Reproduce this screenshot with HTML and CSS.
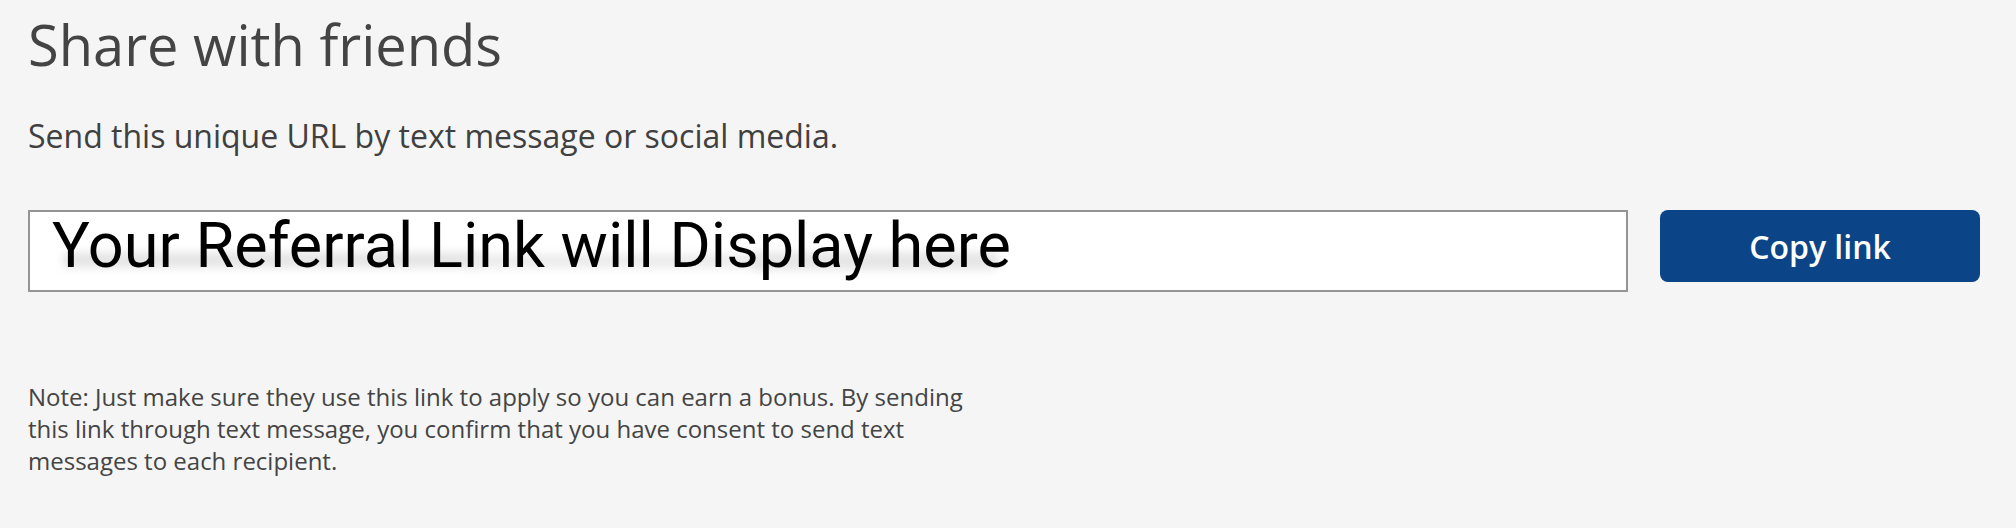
FILE: index.html
```html
<!DOCTYPE html>
<html lang="en">
  <head>
    <meta charset="UTF-8" />
    <meta name="viewport" content="width=device-width, initial-scale=1.0" />
    <title>Share with friends</title>
    <link rel="stylesheet" href="styles.css">
  </head>
  <body>
    <div class="share">
      <h2>Share with friends</h2>
      <p class="intro">Send this unique URL by text message or social media.</p>

      <div class="link-row">
        <div class="link-box">
          <span class="smudge smudge-a"></span>
          <span class="smudge smudge-b"></span>
          <span class="smudge smudge-c"></span>
          <span class="link-text">Your Referral Link will Display here</span>
        </div>
        <button type="button" class="copy-btn">Copy link</button>
      </div>

      <p class="note">
        Note: Just make sure they use this link to apply so you can earn a bonus. By sending
        this link through text message, you confirm that you have consent to send text
        messages to each recipient.
      </p>
    </div>
  </body>
</html>
```

FILE: styles.css
```css
body {
  margin: 0;
  background: #f5f5f5;
  font-family: "Open Sans", Arial, sans-serif;
  color: #404040;
}
.share {
  padding: 10px 36px 0 28px;
}
h2 {
  margin: 0;
  font-size: 56px;
  font-weight: 400;
  line-height: 68px;
  color: #444;
}
.intro {
  margin: 36px 0 0;
  font-size: 32px;
  line-height: 44px;
}
.link-row {
  display: flex;
  align-items: flex-start;
  gap: 32px;
  margin-top: 52px;
}
.link-box {
  position: relative;
  flex: 1;
  height: 78px;
  border: 2px solid #949494;
  background: #fff;
}
.link-text {
  position: relative;
  display: block;
  padding: 2px 0 0 22px;
  font-family: Roboto, "Open Sans", sans-serif;
  font-size: 63px;
  line-height: 64px;
  color: #000;
  white-space: nowrap;
}
.smudge {
  position: absolute;
  background: #e6e6e6;
  border-radius: 10px;
  filter: blur(4px);
}
.smudge-a {
  left: 32px;
  top: 40px;
  width: 420px;
  height: 16px;
}
.smudge-b {
  left: 440px;
  top: 42px;
  width: 300px;
  height: 14px;
  background: #ececec;
}
.smudge-c {
  left: 720px;
  top: 40px;
  width: 250px;
  height: 18px;
}
.copy-btn {
  width: 320px;
  height: 72px;
  padding: 0;
  background: #0b4587;
  color: #fff;
  border: none;
  border-radius: 8px;
  font-family: "Open Sans", Arial, sans-serif;
  font-size: 32px;
  font-weight: 600;
  cursor: pointer;
}
.note {
  max-width: 960px;
  margin: 89px 0 0;
  font-size: 24px;
  line-height: 32px;
  color: #444;
}
```
